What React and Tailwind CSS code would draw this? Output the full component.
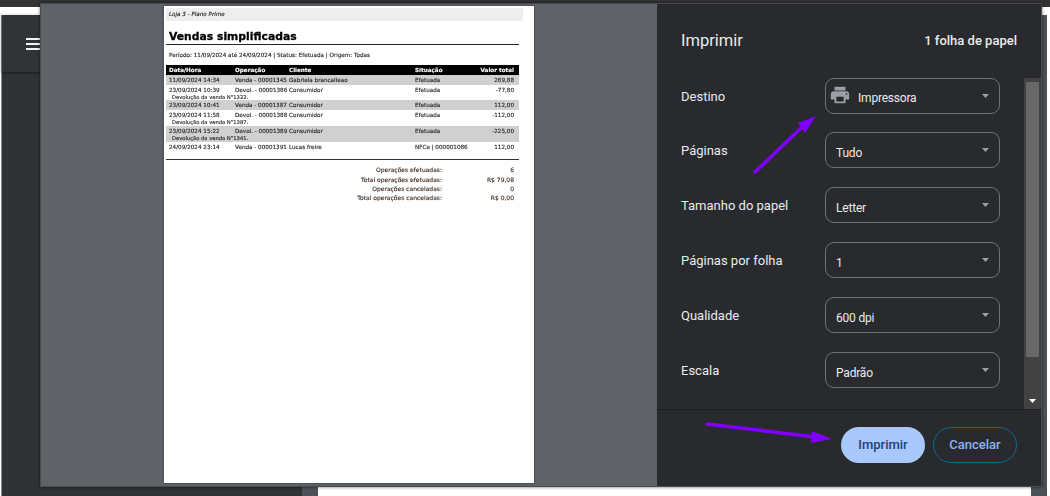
const SANS = "font-['Roboto','Noto_Sans',sans-serif]";

function Caret({ up = false, className = "" }) {
  return (
    <svg width="10" height="6" viewBox="0 0 10 6" preserveAspectRatio="none" className={className}>
      <path d={up ? "M0 6 L5 0 L10 6 Z" : "M0 0 L10 0 L5 6 Z"} fill="currentColor" />
    </svg>
  );
}

function SelectRow({ label, value, icon = false, h = "h-[55px]" }) {
  return (
    <div className={`flex items-start pl-[24px] ${h}`}>
      <div className="w-[144px] h-[36px] pt-[1px] flex items-center text-[13px] text-[#e8eaed]">{label}</div>
      <div className="relative w-[175px] h-[36px] rounded-[9px] border border-[#6f7175] flex items-center pr-[10px]">
        {icon ? (
          <>
            <svg viewBox="0 0 24 24" className="w-[22px] h-[22px] ml-[3px] mb-[2px] shrink-0" fill="#9aa0a6">
              <path d="M19 8H5c-1.66 0-3 1.34-3 3v6h4v4h12v-4h4v-6c0-1.66-1.34-3-3-3zm-3 11H8v-5h8v5zm3-7c-.55 0-1-.45-1-1s.45-1 1-1 1 .45 1 1-.45 1-1 1zm-1-9H6v4h12V3z" />
            </svg>
            <span className="ml-[7px] mt-[4px] text-[12px] tracking-[-0.2px] text-[#e8eaed]">{value}</span>
          </>
        ) : (
          <span className="ml-[10px] mt-[5px] text-[12px] tracking-[-0.2px] text-[#e8eaed]">{value}</span>
        )}
        <Caret className="ml-auto text-[#9aa0a6] w-[7px] h-[4px]" />
      </div>
    </div>
  );
}

const rows = [
  { d: "11/09/2024 14:34", o: "Venda - 00001345", c: "Gabriela brancalleao", s: "Efetuada", v: "269,88", gray: true, h: "h-[10px]" },
  { d: "23/09/2024 10:39", o: "Devol. - 00001386", c: "Consumidor", s: "Efetuada", v: "-77,80", note: "Devolução da venda N°1322.", h: "h-[15px]" },
  { d: "23/09/2024 10:41", o: "Venda - 00001387", c: "Consumidor", s: "Efetuada", v: "112,00", gray: true, h: "h-[10px]" },
  { d: "23/09/2024 11:58", o: "Devol. - 00001388", c: "Consumidor", s: "Efetuada", v: "-112,00", note: "Devolução da venda N°1387.", h: "h-[16px]" },
  { d: "23/09/2024 15:22", o: "Devol. - 00001389", c: "Consumidor", s: "Efetuada", v: "-225,00", note: "Devolução da venda N°1341.", gray: true, h: "h-[16px]" },
  { d: "24/09/2024 23:14", o: "Venda - 00001391", c: "Lucas freire", s: "NFCe | 000001086", v: "112,00", h: "h-[10px]" },
];

function Cols({ d, o, c, s, v }) {
  return (
    <div className="flex items-center h-[10px] pl-[3px] pr-[5px] whitespace-nowrap">
      <span className="w-[66px]">{d}</span>
      <span className="w-[54px]">{o}</span>
      <span className="w-[126px]">{c}</span>
      <span className="w-[60px]">{s}</span>
      <span className="ml-auto text-right">{v}</span>
    </div>
  );
}

function Total({ label, value }) {
  return (
    <div className="flex justify-end h-[9.4px] items-center pr-[5px] text-[6px] text-[#3a2a20]">
      <span className="text-right">{label}</span>
      <span className="w-[72px] text-right">{value}</span>
    </div>
  );
}

function Paper() {
  return (
    <div className="w-[370px] h-[477px] bg-white mt-[2px] ml-[123px] pt-[2px] pl-[2px] shrink-0 font-['DejaVu_Sans',sans-serif] text-[5.65px] text-[#1c1c1c] shadow-[0_0_2px_rgba(0,0,0,0.5)]">
      <div className="blur-[0.2px] [-webkit-text-stroke:0.12px_currentColor]">
        <div className="w-[357px] h-[13px] bg-[#eeeeee] flex items-center pl-[3px] italic text-[5.6px]">Loja 3 - Plano Prime</div>
        <div className="w-[353px]">
          <div className="h-[24px] border-b-[1.5px] border-[#222] flex items-end pl-[3px] font-bold text-[10.8px] text-black leading-[14px] [-webkit-text-stroke:0.3px_black]">Vendas simplificadas</div>
          <div className="h-[20px] pl-[3px] pt-[5px] leading-[10px]">Período: 11/09/2024 até 24/09/2024 | Status: Efetuada | Origem: Todas</div>
          <div className="bg-black text-white font-bold">
            <Cols d="Data/Hora" o="Operação" c="Cliente" s="Situação" v="Valor total" />
          </div>
          {rows.map((r) => (
            <div key={r.o} className={`${r.h} ${r.gray ? "bg-[#d0d0d0]" : "bg-white"}`}>
              <Cols {...r} />
              {r.note && <div className="pl-[6px] text-[5.2px] leading-[4px]">{r.note}</div>}
            </div>
          ))}
          <div className="h-[7px] border-b-[1.5px] border-[#333] box-content" />
          <div className="pt-[5px]">
            <Total label="Operações efetuadas:" value="6" />
            <Total label="Total operações efetuadas:" value="R$ 79,08" />
            <Total label="Operações canceladas:" value="0" />
            <Total label="Total operações canceladas:" value="R$ 0,00" />
          </div>
        </div>
      </div>
    </div>
  );
}

function Sidebar() {
  return (
    <div className={`relative w-[384px] h-full bg-[#292a2d] flex flex-col ${SANS}`}>
      <div className="h-[74px] pl-[24px] pr-[24px] pt-[25px] flex justify-between shrink-0">
        <span className="text-[16.5px] leading-[24px] text-[#e8eaed]">Imprimir</span>
        <span className="text-[13px] leading-[24px] font-medium text-[#e8eaed]">1 folha de papel</span>
      </div>
      <div className="flex-1 min-h-0 relative overflow-hidden">
        <SelectRow label="Destino" value="Impressora" icon h="h-[54px]" />
        <SelectRow label="Páginas" value="Tudo" />
        <SelectRow label="Tamanho do papel" value="Letter" />
        <SelectRow label="Páginas por folha" value="1" />
        <SelectRow label="Qualidade" value="600 dpi" />
        <SelectRow label="Escala" value="Padrão" h="h-[37px]" />
        <div className="absolute right-0 top-[-13px] bottom-0 w-[17px] bg-[#424242] flex flex-col items-center">
          <div className="h-[17px] flex items-center justify-center text-[#7f7f7f]"><Caret up className="w-[7px] h-[4px]" /></div>
          <div className="w-[13px] h-[275px] bg-[#686868]" />
          <div className="mt-auto h-[17px] flex items-center justify-center text-white"><Caret className="w-[7px] h-[4px]" /></div>
        </div>
      </div>
      <div className="h-[77px] shrink-0 border-t border-[#1f2022] flex items-start justify-end gap-[8px] pt-[17px] pr-[24px]">
        <button className="w-[84px] h-[36px] rounded-full bg-[#a8c7fa] text-[#1f3f78] text-[13px] font-medium">Imprimir</button>
        <button className="w-[84px] h-[36px] rounded-full border border-[#0b6a94] text-[#8ab4f8] text-[13px] font-medium">Cancelar</button>
      </div>
    </div>
  );
}

export default function App() {
  return (
    <div className="relative w-[1050px] h-[496px] overflow-hidden bg-white flex flex-col">
      <div className="h-[7px] bg-[#333333] shrink-0" />
      <div className="h-[8px] bg-white shrink-0" />
      <div className="flex-1 flex min-h-0">
        <div className="w-[1px] bg-white" />
        <div className="w-[1px] bg-[#8a8a8a]" />
        <div className="w-[300px] bg-[#2f3335] flex flex-col">
          <div className="h-[57px] pl-[24px] pt-[23px] shadow-[0_1px_3px_rgba(0,0,0,0.5)] bg-[#303436]">
            <div className="w-[14px] h-[12px] flex flex-col justify-between">
              <div className="h-[2px] bg-[#f2f2f2]" />
              <div className="h-[2px] bg-[#f2f2f2]" />
              <div className="h-[2px] bg-[#f2f2f2]" />
            </div>
          </div>
        </div>
        <div className="w-[16px] bg-[#4c5257]" />
        <div className="w-[713px] bg-white" />
        <div className="w-[16px] bg-[#4c5257]" />
        <div className="flex-1 bg-white" />
      </div>

      <div className="absolute left-[40px] top-[3px] w-[1002px] h-[484px] flex bg-[#5f6368] border border-[#4a4d50] shadow-[0_0_3px_rgba(0,0,0,0.6)]">
        <div className="flex-1 min-w-0 flex items-start">
          <Paper />
        </div>
        <Sidebar />
      </div>

      <svg className="absolute inset-0 pointer-events-none" width="1050" height="496" viewBox="0 0 1050 496">
        <path d="M755 172 L801 128" stroke="#7f00ff" strokeWidth="3.5" strokeLinecap="round" fill="none" />
        <path d="M816 116 L798 123 L805 133 Z" fill="#7f00ff" />
        <path d="M707 424 L815 437" stroke="#7f00ff" strokeWidth="3.5" strokeLinecap="round" fill="none" />
        <path d="M832 439 L812 431 L811 443 Z" fill="#7f00ff" />
      </svg>
    </div>
  );
}
